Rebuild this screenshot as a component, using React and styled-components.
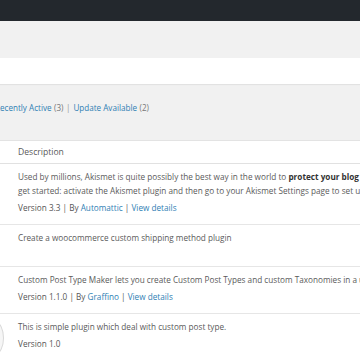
import styled, { createGlobalStyle } from "styled-components";

const GlobalStyle = createGlobalStyle`
  html, body {
    margin: 0;
    padding: 0;
    background: #f1f1f1;
    overflow: hidden;
  }
  body {
    font-family: "Open Sans", "DejaVu Sans", sans-serif;
    color: #555;
  }
`;

const plugins = [
  {
    h: 61,
    lines: [
      <>
        Used by millions, Akismet is quite possibly the best way in the world to{" "}
        <strong>protect your blog from spam</strong>. It keeps your site protected even while you sleep. To
      </>,
      "get started: activate the Akismet plugin and then go to your Akismet Settings page to set up your API key.",
    ],
    version: "3.3",
    author: "Automattic",
    details: true,
  },
  {
    h: 42,
    lines: ["Create a woocommerce custom shipping method plugin"],
  },
  {
    h: 47,
    lines: ["Custom Post Type Maker lets you create Custom Post Types and custom Taxonomies in a user friendly way."],
    version: "1.1.0",
    author: "Graffino",
    details: true,
  },
  {
    h: 60,
    lines: ["This is simple plugin which deal with custom post type."],
    version: "1.0",
  },
];

const App = () => {
  return (
    <>
      <GlobalStyle />
      <AdminBar />
      <Wrap>
        <TitleArea />
        <NoticeBand />
        <Filters>
          <li>
            <Link>Recently Active</Link> <Count>(3)</Count> <Sep>|</Sep>
          </li>
          <li>
            <Link>Update Available</Link> <Count>(2)</Count>
          </li>
        </Filters>

        <Table>
          <HeadRow>Description</HeadRow>
          {plugins.map((p, i) => (
            <Row key={i} $h={p.h}>
              {p.lines.map((l, j) => (
                <Line key={j}>{l}</Line>
              ))}
              {p.version && (
                <Meta>
                  Version {p.version}
                  {p.author && (
                    <>
                      {" "}| By <Link>{p.author}</Link>
                    </>
                  )}
                  {p.details && (
                    <>
                      {" "}| <Link>View details</Link>
                    </>
                  )}
                </Meta>
              )}
              {i === 3 && <EdgeShade />}
            </Row>
          ))}
        </Table>
      </Wrap>
    </>
  );
};

const AdminBar = styled.div`
  height: 21px;
  background: #23282d;
`;

const Wrap = styled.div`
  width: 360px;
  overflow: hidden;
`;

const TitleArea = styled.div`
  height: 37px;
`;

const NoticeBand = styled.div`
  height: 26px;
  background: #fff;
  box-shadow: 0 1px 1px rgba(0, 0, 0, 0.06);
`;

const Filters = styled.ul`
  list-style: none;
  display: flex;
  gap: 3px;
  margin: 17px 0 0 -5px;
  padding: 0;
  height: 14px;
  font-size: 8.1px;
  line-height: 14px;
  white-space: nowrap;
  color: #666;

  li {
    display: flex;
    gap: 2.5px;
  }
`;

const Link = styled.span`
  color: #2f80b4;
`;

const Count = styled.span`
  color: #777;
`;

const Sep = styled.span`
  color: #999;
`;

const Table = styled.div`
  margin-top: 25px;
  width: 900px;
  background: #fff;
  border-top: 1px solid #e3e3e3;
`;

const HeadRow = styled.div`
  height: 22px;
  padding-left: 18px;
  font-size: 8.6px;
  line-height: 22px;
  color: #5a5a5a;
  border-bottom: 1px solid #e1e1e1;
`;

const Row = styled.div`
  position: relative;
  min-height: ${(p) => p.$h}px;
  padding: 6px 0 0 18px;
  border-bottom: 1px solid #e6e6e6;
  box-sizing: border-box;
  font-size: 8.2px;
  color: #5a5a5a;
  white-space: nowrap;

  strong {
    color: #333;
    font-weight: 700;
  }
`;

const Line = styled.div`
  line-height: 14px;
`;

const Meta = styled.div`
  margin-top: 3px;
  line-height: 14px;
  color: #555;
`;

const EdgeShade = styled.div`
  position: absolute;
  left: -12px;
  top: 8px;
  width: 14px;
  height: 30px;
  border-radius: 50%;
  background: #f6f6f6;
  border: 1px solid #d8d8d8;
`;

export default App;
